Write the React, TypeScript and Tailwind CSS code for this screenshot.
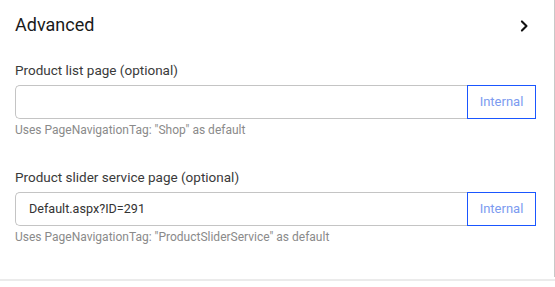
import React from "react";

function Chevron() {
  return (
    <svg width="20" height="20" viewBox="0 0 24 24" fill="none" stroke="#111" strokeWidth="2.5" strokeLinecap="round" strokeLinejoin="round">
      <path d="m9.5 17.5 5.5-5.5-5.5-5.5" />
    </svg>
  );
}

function Field({ label, value, help }: { label: string; value: string; help: string }) {
  return (
    <div className="flex flex-col">
      <div className="text-[13.5px] leading-[20px] text-[#3a3a3a]">{label}</div>
      <div className="mt-[5px] flex h-[34px]">
        <div className="flex flex-1 items-center rounded-l-[5px] border border-r-0 border-[#c4c4c4] pl-[13px] text-[12.6px] text-[#333]">
          {value}
        </div>
        <button className="flex w-[69px] items-center justify-center border border-[#1a56ff] bg-white text-[13px] text-[#7c9bf0]">
          Internal
        </button>
      </div>
      <div className="mt-[3px] text-[12px] leading-[16px] text-[#8a8a8a]">{help}</div>
    </div>
  );
}

export default function App() {
  return (
    <div className="h-[287px] w-[555px] bg-white" style={{ fontFamily: "Roboto, 'Noto Sans', sans-serif" }}>
      <div className="h-[277px] w-[555px] border-r border-[#c8c8c8] pl-[15px] pr-[18px] pt-[13px]">
        <div className="flex h-[24px] items-center justify-between">
          <div className="text-[18px] leading-[24px] text-[#1a1a1a]">Advanced</div>
          <div className="mr-[2px] mt-[1px]">
            <Chevron />
          </div>
        </div>
        <div className="mt-[23px] flex flex-col gap-[29px]">
          <Field label="Product list page (optional)" value="" help={'Uses PageNavigationTag: "Shop" as default'} />
          <Field label="Product slider service page (optional)" value="Default.aspx?ID=291" help={'Uses PageNavigationTag: "ProductSliderService" as default'} />
        </div>
      </div>
      <div className="mt-[2px] h-[2px] w-[555px] bg-[#ebebeb]" />
    </div>
  );
}
